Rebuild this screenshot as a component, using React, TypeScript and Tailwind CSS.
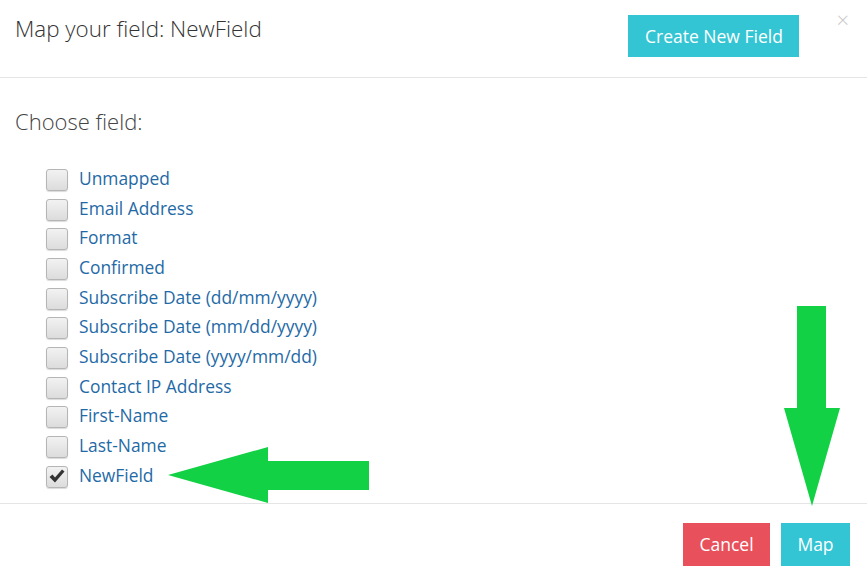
import { useState } from 'react';

const FIELDS = [
  'Unmapped',
  'Email Address',
  'Format',
  'Confirmed',
  'Subscribe Date (dd/mm/yyyy)',
  'Subscribe Date (mm/dd/yyyy)',
  'Subscribe Date (yyyy/mm/dd)',
  'Contact IP Address',
  'First-Name',
  'Last-Name',
  'NewField',
];

function Box({ checked }: { checked: boolean }) {
  return (
    <span className="flex h-[22px] w-[22px] shrink-0 items-center justify-center rounded-[3px] border border-[#b5b5b5] bg-gradient-to-b from-[#f2f2f2] to-[#dcdcdc] shadow-[0_1px_1px_rgba(0,0,0,0.15)]">
      {checked && (
        <svg width="16" height="15" viewBox="0 0 16 15">
          <path d="M0.5 8 L3.5 5.5 L6 8.5 L13 0.5 L15.5 2.5 L6 13.5 Z" fill="#333" />
        </svg>
      )}
    </span>
  );
}

export default function App() {
  const [sel, setSel] = useState('NewField');
  return (
    <div className="relative h-[588px] w-[867px] overflow-hidden bg-white font-['Open_Sans',sans-serif]">
      <div className="flex h-[78px] items-start border-b border-[#e5e5e5] px-[15px]">
        <div className="mt-[12px] text-[22.4px] font-light leading-[34px] text-[#333]">Map your field: NewField</div>
        <button className="ml-auto mt-[15px] h-[42px] w-[171px] bg-[#33c5d3] text-[17.5px] text-white">Create New Field</button>
        <span className="ml-[37px] mr-[3px] mt-[6px] text-[22px] font-light leading-[26px] text-[#c8c8c8]">×</span>
      </div>
      <div className="h-[426px] border-b border-[#e5e5e5] px-[15px] pt-[26px]">
        <div className="text-[22px] font-light leading-[34px] text-[#444]">Choose field:</div>
        <div className="mt-[25px] flex flex-col pl-[31px]">
          {FIELDS.map((f) => (
            <label key={f} onClick={() => setSel(f)} className="flex h-[29.7px] cursor-pointer items-center gap-[11px]">
              <span className="mt-[4px]"><Box checked={sel === f} /></span>
              <span className="text-[17.4px] leading-[22px] text-[#1f6aa6]">{f}</span>
            </label>
          ))}
        </div>
      </div>
      <div className="flex justify-end gap-[11px] pr-[17px] pt-[19px]">
        <button className="h-[43px] w-[87px] bg-[#e8505b] text-[17.5px] text-white">Cancel</button>
        <button className="h-[43px] w-[69px] bg-[#33c5d3] text-[17.5px] text-white">Map</button>
      </div>
      <svg className="pointer-events-none absolute left-0 top-0" width="867" height="588">
        <polygon points="168,475 268,447 268,461 369,461 369,490 268,490 268,503" fill="#12d145" />
        <polygon points="797,306 826,306 826,408 840,408 812,506 784,408 797,408" fill="#12d145" />
      </svg>
    </div>
  );
}
